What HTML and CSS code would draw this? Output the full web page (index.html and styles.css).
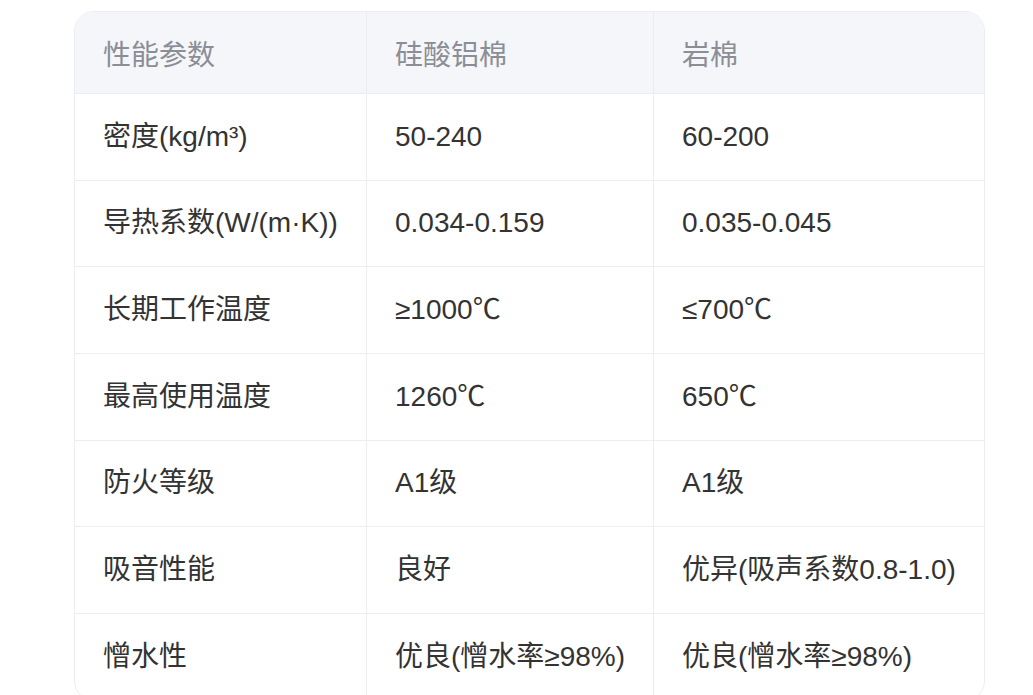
FILE: index.html
```html
<!DOCTYPE html>
<html lang="zh">
<head>
<meta charset="utf-8">
<link rel="stylesheet" href="styles.css">
</head>
<body>
<div class="page">
  <div class="table-wrap">
    <table class="spec">
      <colgroup>
        <col class="c1"><col class="c2"><col class="c3">
      </colgroup>
      <thead>
        <tr><th>性能参数</th><th>硅酸铝棉</th><th>岩棉</th></tr>
      </thead>
      <tbody>
        <tr><td>密度(kg/m³)</td><td>50-240</td><td>60-200</td></tr>
        <tr><td>导热系数(W/(m·K))</td><td>0.034-0.159</td><td>0.035-0.045</td></tr>
        <tr><td>长期工作温度</td><td>≥1000℃</td><td>≤700℃</td></tr>
        <tr><td>最高使用温度</td><td>1260℃</td><td>650℃</td></tr>
        <tr><td>防火等级</td><td>A1级</td><td>A1级</td></tr>
        <tr><td>吸音性能</td><td>良好</td><td>优异(吸声系数0.8-1.0)</td></tr>
        <tr><td>憎水性</td><td>优良(憎水率≥98%)</td><td>优良(憎水率≥98%)</td></tr>
      </tbody>
    </table>
  </div>
</div>
</body>
</html>
```

FILE: styles.css
```css
html, body {
  margin: 0;
  padding: 0;
  background: #ffffff;
}
body {
  font-family: "Liberation Sans", "Noto Sans CJK SC", sans-serif;
}
.page {
  padding: 11px 0 0 74px;
}
.table-wrap {
  width: 911px;
  border: 1px solid #ebedf0;
  border-radius: 20px;
  overflow: hidden;
  box-sizing: border-box;
}
.spec {
  width: 100%;
  border-collapse: separate;
  border-spacing: 0;
  table-layout: fixed;
}
.c1 { width: 291px; }
.c2 { width: 287px; }
.c3 { width: auto; }
.spec th,
.spec td {
  text-align: left;
  font-size: 28px;
  line-height: 42px;
  padding: 0 0 0 28px;
  white-space: nowrap;
  border-left: 1px solid #ebedf0;
}
.spec th:first-child,
.spec td:first-child {
  border-left: none;
  padding-left: 28px;
}
.spec th {
  background: #f5f6f9;
  color: #8b8e96;
  font-weight: normal;
  height: 81px;
  padding-top: 7px;
  box-sizing: border-box;
}
.spec td {
  color: #333333;
  height: 86.67px;
  box-sizing: border-box;
  border-top: 1px solid #ebedf0;
}
```
